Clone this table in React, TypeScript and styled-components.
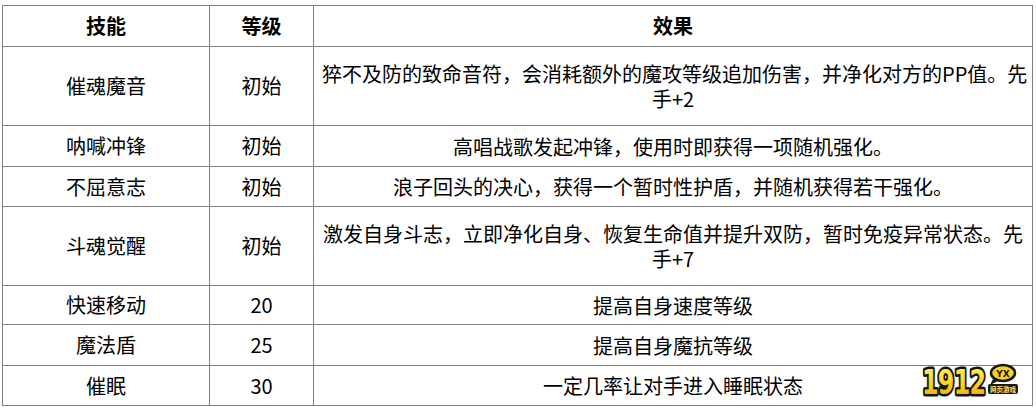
import React from "react";
import styled, { createGlobalStyle } from "styled-components";

const Global = createGlobalStyle`
  html, body { margin: 0; padding: 0; background: #fff; }
  body { font-family: "Noto Sans CJK SC", "Noto Sans", sans-serif; color: #000; }
`;

const Page = styled.div`
  position: relative;
  width: 1036px;
  height: 407px;
  padding: 5px 0 0 2px;
  box-sizing: border-box;
`;

const Table = styled.table`
  border-collapse: collapse;
  width: 1031px;
  table-layout: fixed;
  font-size: 20px;
  line-height: 26px;
`;

const Row = styled.tr<{ $h: number }>`
  height: ${(p) => p.$h}px;
`;

const HeadCell = styled.th<{ $w?: number }>`
  ${(p) => (p.$w ? `width: ${p.$w}px;` : "")}
  border: 1px solid #808080;
  font-weight: 700;
  text-align: center;
  vertical-align: middle;
  padding: 0;
  box-sizing: border-box;
`;

const Cell = styled.td`
  border: 1px solid #808080;
  text-align: center;
  vertical-align: middle;
  padding: 0 8px;
  font-weight: 400;
  white-space: nowrap;
  box-sizing: border-box;
`;

const Line = styled.div`
  height: 25px;
  line-height: 25px;
  overflow: visible;
`;

const Logo = styled.svg`
  position: absolute;
  left: 916px;
  top: 361px;
`;

type Skill = { name: string; level: string; effect: string[]; h: number };

const skills: Skill[] = [
  {
    name: "催魂魔音",
    level: "初始",
    effect: ["猝不及防的致命音符，会消耗额外的魔攻等级追加伤害，并净化对方的PP值。先", "手+2"],
    h: 79,
  },
  { name: "呐喊冲锋", level: "初始", effect: ["高唱战歌发起冲锋，使用时即获得一项随机强化。"], h: 41 },
  { name: "不屈意志", level: "初始", effect: ["浪子回头的决心，获得一个暂时性护盾，并随机获得若干强化。"], h: 40 },
  {
    name: "斗魂觉醒",
    level: "初始",
    effect: ["激发自身斗志，立即净化自身、恢复生命值并提升双防，暂时免疫异常状态。先", "手+7"],
    h: 79,
  },
  { name: "快速移动", level: "20", effect: ["提高自身速度等级"], h: 39 },
  { name: "魔法盾", level: "25", effect: ["提高自身魔抗等级"], h: 41 },
  { name: "催眠", level: "30", effect: ["一定几率让对手进入睡眠状态"], h: 40 },
];

const LogoMark = () => (
  <Logo width="104" height="42" viewBox="0 0 104 42">
    <defs>
      <linearGradient id="yl" x1="0" y1="0" x2="0" y2="1">
        <stop offset="0" stopColor="#fff36a" />
        <stop offset="0.55" stopColor="#ffd21a" />
        <stop offset="1" stopColor="#e79a00" />
      </linearGradient>
    </defs>
    <g transform="translate(6 33) scale(0.7 1)">
      <text
        x="0"
        y="0"
        fontFamily="DejaVu Sans, sans-serif"
        fontWeight="900"
        fontSize="34"
        letterSpacing="-1"
        fill="url(#yl)"
        stroke="#151515"
        strokeWidth="5"
        strokeLinejoin="round"
        style={{ paintOrder: "stroke" }}
      >
        1912
      </text>
    </g>
    <path d="M77 18 L74 24 L82 20 Z" fill="#151515" />
    <ellipse cx="87" cy="12" rx="12" ry="8" fill="#ffd21a" stroke="#151515" strokeWidth="2.5" />
    <text x="87" y="15.5" textAnchor="middle" fontFamily="DejaVu Sans, sans-serif" fontWeight="700" fontSize="9" fill="#151515">
      YX
    </text>
    <rect x="72" y="23" width="30" height="10" rx="2" fill="#1a1a1a" />
    <text
      x="87"
      y="31"
      textAnchor="middle"
      fontFamily="Noto Sans CJK SC, sans-serif"
      fontWeight="700"
      fontSize="6.5"
      fill="#ffe36a"
    >
      网页游戏
    </text>
  </Logo>
);

export default function App() {
  return (
    <Page>
      <Global />
      <Table>
        <thead>
          <Row $h={41}>
            <HeadCell $w={207}>技能</HeadCell>
            <HeadCell $w={104}>等级</HeadCell>
            <HeadCell>效果</HeadCell>
          </Row>
        </thead>
        <tbody>
          {skills.map((s) => (
            <Row key={s.name} $h={s.h}>
              <Cell>{s.name}</Cell>
              <Cell>{s.level}</Cell>
              <Cell>
                {s.effect.map((line, i) => (
                  <Line key={i}>{line}</Line>
                ))}
              </Cell>
            </Row>
          ))}
        </tbody>
      </Table>
      <LogoMark />
    </Page>
  );
}
